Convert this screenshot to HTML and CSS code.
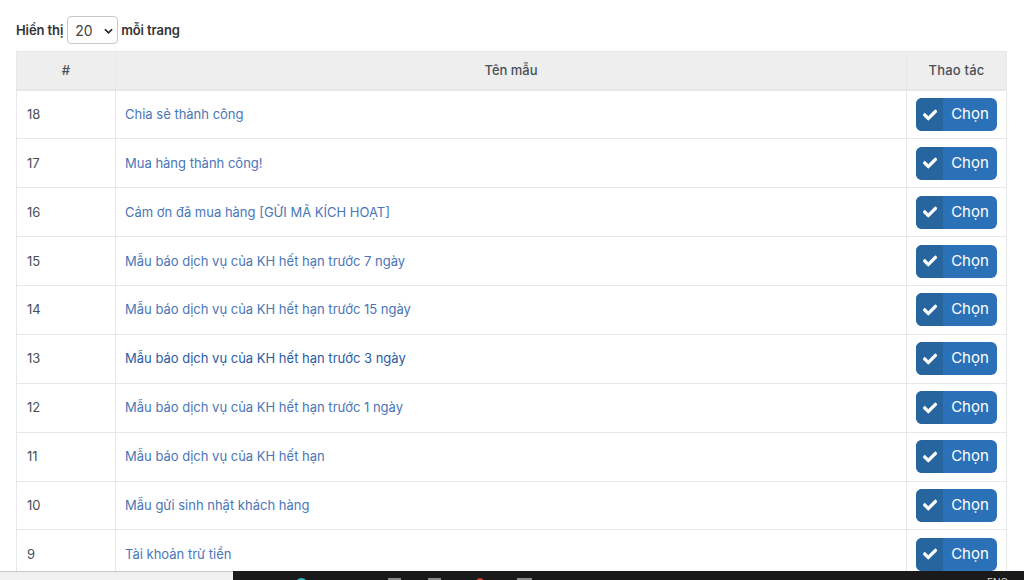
FILE: index.html
```html
<!DOCTYPE html>
<html>
	<head>
		<meta charset="UTF-8">
		<title>Danh sách mẫu</title>
		<link rel="stylesheet" href="styles.css">
	</head>
	<body>
		<div class="page">
			<div class="length">
				Hiển thị
				<select class="length-select"><option>20</option></select>
				mỗi trang
			</div>
			<table class="tbl">
				<thead>
					<tr>
						<th class="col-id">#</th>
						<th>Tên mẫu</th>
						<th class="col-act">Thao tác</th>
					</tr>
				</thead>
				<tbody>
					<tr>
						<td class="num">18</td>
						<td><a href="javascript:;">Chia sẻ thành công</a></td>
						<td><button class="btn"><span class="btn-icon"><svg viewBox="0 0 512 512"><path d="M173.9 439.4 7.5 273c-10-10-10-26.200 0-36.200l36.200-36.200c10-10 26.200-10 36.200 0L192 312.700 432.100 72.600c10-10 26.200-10 36.200 0l36.200 36.200c10 10 10 26.200 0 36.200L210.100 439.400c-10 10-26.200 10-36.200 0z"/></svg></span><span class="btn-text">Chọn</span></button></td>
					</tr>
					<tr>
						<td class="num">17</td>
						<td><a href="javascript:;">Mua hàng thành công!</a></td>
						<td><button class="btn"><span class="btn-icon"><svg viewBox="0 0 512 512"><path d="M173.9 439.4 7.5 273c-10-10-10-26.200 0-36.200l36.200-36.200c10-10 26.200-10 36.200 0L192 312.700 432.100 72.600c10-10 26.200-10 36.200 0l36.200 36.200c10 10 10 26.200 0 36.200L210.100 439.400c-10 10-26.200 10-36.200 0z"/></svg></span><span class="btn-text">Chọn</span></button></td>
					</tr>
					<tr>
						<td class="num">16</td>
						<td><a href="javascript:;">Cám ơn đã mua hàng [GỬI MÃ KÍCH HOẠT]</a></td>
						<td><button class="btn"><span class="btn-icon"><svg viewBox="0 0 512 512"><path d="M173.9 439.4 7.5 273c-10-10-10-26.200 0-36.200l36.200-36.200c10-10 26.200-10 36.200 0L192 312.700 432.100 72.600c10-10 26.200-10 36.200 0l36.200 36.200c10 10 10 26.200 0 36.200L210.100 439.400c-10 10-26.200 10-36.200 0z"/></svg></span><span class="btn-text">Chọn</span></button></td>
					</tr>
					<tr>
						<td class="num">15</td>
						<td><a href="javascript:;">Mẫu báo dịch vụ của KH hết hạn trước 7 ngày</a></td>
						<td><button class="btn"><span class="btn-icon"><svg viewBox="0 0 512 512"><path d="M173.9 439.4 7.5 273c-10-10-10-26.200 0-36.200l36.200-36.200c10-10 26.200-10 36.200 0L192 312.700 432.100 72.600c10-10 26.200-10 36.200 0l36.200 36.200c10 10 10 26.200 0 36.200L210.100 439.400c-10 10-26.200 10-36.200 0z"/></svg></span><span class="btn-text">Chọn</span></button></td>
					</tr>
					<tr>
						<td class="num">14</td>
						<td><a href="javascript:;">Mẫu báo dịch vụ của KH hết hạn trước 15 ngày</a></td>
						<td><button class="btn"><span class="btn-icon"><svg viewBox="0 0 512 512"><path d="M173.9 439.4 7.5 273c-10-10-10-26.200 0-36.200l36.200-36.200c10-10 26.200-10 36.200 0L192 312.700 432.100 72.600c10-10 26.200-10 36.200 0l36.200 36.200c10 10 10 26.200 0 36.200L210.100 439.400c-10 10-26.200 10-36.200 0z"/></svg></span><span class="btn-text">Chọn</span></button></td>
					</tr>
					<tr>
						<td class="num">13</td>
						<td><a href="javascript:;" class="hover">Mẫu báo dịch vụ của KH hết hạn trước 3 ngày</a></td>
						<td><button class="btn"><span class="btn-icon"><svg viewBox="0 0 512 512"><path d="M173.9 439.4 7.5 273c-10-10-10-26.200 0-36.200l36.200-36.200c10-10 26.200-10 36.200 0L192 312.700 432.100 72.600c10-10 26.200-10 36.200 0l36.200 36.200c10 10 10 26.200 0 36.200L210.100 439.400c-10 10-26.200 10-36.200 0z"/></svg></span><span class="btn-text">Chọn</span></button></td>
					</tr>
					<tr>
						<td class="num">12</td>
						<td><a href="javascript:;">Mẫu báo dịch vụ của KH hết hạn trước 1 ngày</a></td>
						<td><button class="btn"><span class="btn-icon"><svg viewBox="0 0 512 512"><path d="M173.9 439.4 7.5 273c-10-10-10-26.200 0-36.200l36.200-36.200c10-10 26.200-10 36.200 0L192 312.700 432.100 72.600c10-10 26.200-10 36.200 0l36.200 36.200c10 10 10 26.200 0 36.200L210.100 439.400c-10 10-26.200 10-36.200 0z"/></svg></span><span class="btn-text">Chọn</span></button></td>
					</tr>
					<tr>
						<td class="num">11</td>
						<td><a href="javascript:;">Mẫu báo dịch vụ của KH hết hạn</a></td>
						<td><button class="btn"><span class="btn-icon"><svg viewBox="0 0 512 512"><path d="M173.9 439.4 7.5 273c-10-10-10-26.200 0-36.200l36.200-36.200c10-10 26.200-10 36.200 0L192 312.700 432.100 72.600c10-10 26.200-10 36.200 0l36.200 36.200c10 10 10 26.200 0 36.200L210.100 439.400c-10 10-26.200 10-36.200 0z"/></svg></span><span class="btn-text">Chọn</span></button></td>
					</tr>
					<tr>
						<td class="num">10</td>
						<td><a href="javascript:;">Mẫu gửi sinh nhật khách hàng</a></td>
						<td><button class="btn"><span class="btn-icon"><svg viewBox="0 0 512 512"><path d="M173.9 439.4 7.5 273c-10-10-10-26.200 0-36.200l36.200-36.200c10-10 26.200-10 36.200 0L192 312.700 432.100 72.600c10-10 26.200-10 36.200 0l36.200 36.200c10 10 10 26.200 0 36.200L210.100 439.400c-10 10-26.200 10-36.200 0z"/></svg></span><span class="btn-text">Chọn</span></button></td>
					</tr>
					<tr>
						<td class="num">9</td>
						<td><a href="javascript:;">Tài khoản trừ tiền</a></td>
						<td><button class="btn"><span class="btn-icon"><svg viewBox="0 0 512 512"><path d="M173.9 439.4 7.5 273c-10-10-10-26.200 0-36.200l36.200-36.200c10-10 26.200-10 36.200 0L192 312.700 432.100 72.600c10-10 26.200-10 36.200 0l36.200 36.200c10 10 10 26.200 0 36.200L210.100 439.400c-10 10-26.200 10-36.200 0z"/></svg></span><span class="btn-text">Chọn</span></button></td>
					</tr>
				</tbody>
			</table>
		</div>
		<div class="taskbar">
			<div class="taskbar-left"></div>
			<div class="taskbar-right">
				<span class="tb-app tb-teal"></span>
				<span class="tb-app tb-gray1"></span>
				<span class="tb-app tb-gray2"></span>
				<span class="tb-app tb-red"></span>
				<span class="tb-app tb-gray3"></span>
				<span class="tb-lang">ENG</span>
			</div>
		</div>
	</body>
</html>
```

FILE: styles.css
```css
*{
    margin: 0;
    padding: 0;
    box-sizing: border-box;
}
html,body{
    height: 100%;
    overflow: hidden;
    background: #fff;
}
body{
    font-family: "Inter", "Noto Sans", sans-serif;
    font-size: 13px;
    color: #4a4f57;
}
.page{
    padding: 16px 17px 0 16px;
}
.length{
    display: flex;
    align-items: center;
    gap: 3px;
    height: 28px;
    margin-bottom: 7px;
    font-weight: 600;
    letter-spacing: -0.1px;
    color: #333;
}
.length-select{
    appearance: none;
    width: 51px;
    height: 28px;
    margin-left: 1px;
    padding-left: 7px;
    border: 1px solid #c4c7cb;
    border-radius: 4px;
    background: #fff url("data:image/svg+xml,%3Csvg xmlns='http://www.w3.org/2000/svg' viewBox='0 0 10 6'%3E%3Cpath d='M1 1l4 4 4-4' fill='none' stroke='%23222' stroke-width='1.8'/%3E%3C/svg%3E") no-repeat 36px 11px / 9px 6px;
    font-family: inherit;
    font-size: 14px;
    letter-spacing: 0;
    color: #444;
}
.tbl{
    width: 991px;
    border-collapse: collapse;
    table-layout: fixed;
}
.tbl th,.tbl td{
    border: 1px solid #e6e7ea;
}
.tbl th{
    height: 38.4px;
    background: #eeeeee;
    border-bottom-width: 2px;
    font-weight: 500;
    color: #4a5058;
}
.tbl td{
    height: 48.9px;
    padding: 0 9px 1px;
}
.tbl td.num{
    padding-left: 10px;
}
.col-id{
    width: 99px;
}
.col-act{
    width: 100px;
    letter-spacing: 0.2px;
}
.tbl a{
    color: #4a76b8;
    text-decoration: none;
}
.tbl a.hover{
    color: #2a5ba5;
}
.btn{
    display: flex;
    width: 81px;
    height: 33px;
    margin-top: 1px;
    border: 0;
    border-radius: 6px;
    overflow: hidden;
    background: #2b71b8;
    color: #fff;
    font-family: inherit;
    font-size: 15px;
}
.btn-icon{
    display: flex;
    align-items: center;
    justify-content: center;
    width: 27px;
    background: #27659f;
}
.btn-icon svg{
    width: 14px;
    height: 14px;
    fill: #fff;
    stroke: #fff;
    stroke-width: 24px;
}
.btn-text{
    flex: 1;
    line-height: 32px;
    text-align: center;
}
.taskbar{
    position: absolute;
    left: 0;
    right: 0;
    bottom: 0;
    display: flex;
    height: 9px;
}
.taskbar-left{
    width: 233px;
    background: #f0f0f0;
    border-top: 1px solid #c9c9c9;
}
.taskbar-right{
    position: relative;
    flex: 1;
    overflow: hidden;
    background: #1a1a1a;
}
.tb-app{
    position: absolute;
    top: 7px;
    width: 13px;
    height: 13px;
    background: #8a8a8a;
}
.tb-teal{
    left: 62px;
    border-radius: 50%;
    background: #2bb5c0;
}
.tb-gray1{
    left: 155px;
}
.tb-gray2{
    left: 195px;
}
.tb-red{
    left: 242px;
    width: 10px;
    border-radius: 50%;
    background: #d9372c;
}
.tb-gray3{
    left: 284px;
    width: 15px;
}
.tb-lang{
    position: absolute;
    left: 754px;
    top: 5px;
    font-size: 10px;
    color: #ddd;
}
```
